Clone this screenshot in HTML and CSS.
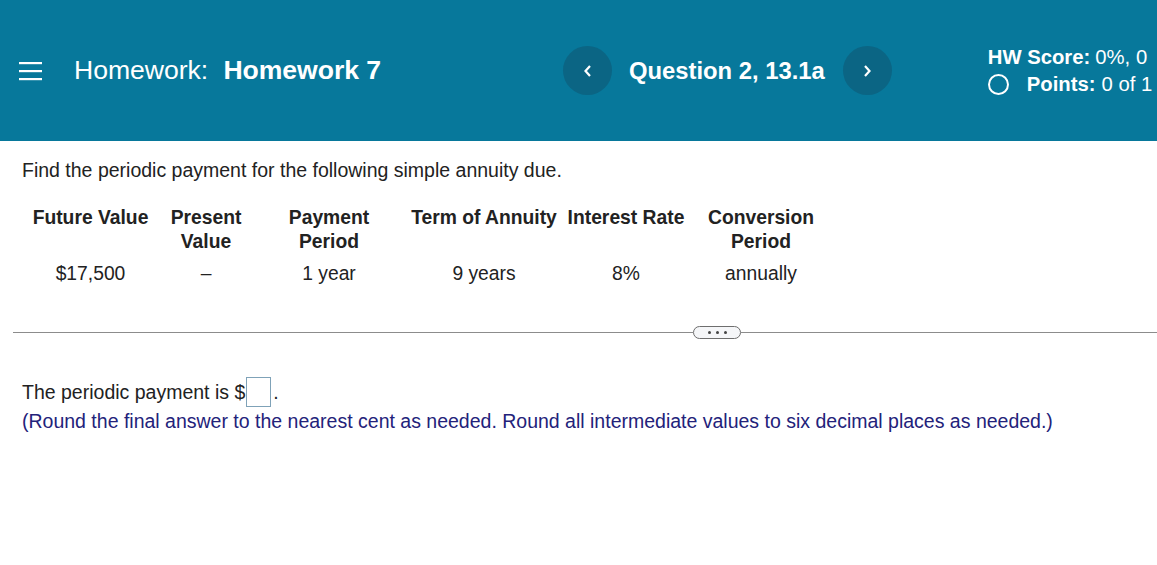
FILE: index.html
```html
<!DOCTYPE html>
<html>
<head>
<meta charset="utf-8">
<link rel="stylesheet" href="styles.css">
</head>
<body>
<header class="topbar">
  <div class="left">
    <svg class="menu" width="23" height="20" viewBox="0 0 23 20"><rect x="0" y="1" width="23" height="2.2" fill="#fff"/><rect x="0" y="9" width="23" height="2.2" fill="#fff"/><rect x="0" y="17" width="23" height="2.2" fill="#fff"/></svg>
    <div class="title">Homework: <b>Homework 7</b></div>
  </div>
  <div class="nav">
    <span class="circ"><svg width="10" height="14" viewBox="0 0 10 14"><path d="M7 2 L2.5 7 L7 12" fill="none" stroke="#fff" stroke-width="2.2"/></svg></span>
    <span class="qtitle">Question 2, 13.1a</span>
    <span class="circ"><svg width="10" height="14" viewBox="0 0 10 14"><path d="M3 2 L7.5 7 L3 12" fill="none" stroke="#fff" stroke-width="2.2"/></svg></span>
  </div>
  <div class="score">
    <div class="srow"><b>HW Score:</b> 0%, 0</div>
    <div class="srow prow"><span class="ring"></span><b>Points:</b> 0 of 1</div>
  </div>
</header>
<main class="content">
  <p class="prompt">Find the periodic payment for the following simple annuity due.</p>
  <table class="data">
    <colgroup><col class="c1"><col class="c2"><col class="c3"><col class="c4"><col class="c5"><col class="c6"></colgroup>
    <thead>
      <tr><th>Future Value</th><th>Present<br>Value</th><th>Payment<br>Period</th><th>Term of Annuity</th><th>Interest Rate</th><th>Conversion<br>Period</th></tr>
    </thead>
    <tbody>
      <tr><td>$17,500</td><td>&ndash;</td><td>1 year</td><td>9 years</td><td>8%</td><td>annually</td></tr>
    </tbody>
  </table>
  <div class="divider">
    <span class="seg-left"></span>
    <span class="pill"><i></i><i></i><i></i></span>
    <span class="seg-right"></span>
  </div>
  <div class="answer">
    <div class="aline">The periodic payment is $<span class="inbox"></span>.</div>
    <div class="note">(Round the final answer to the nearest cent as needed. Round all intermediate values to six decimal places as needed.)</div>
  </div>
</main>
</body>
</html>
```
FILE: styles.css
```css
html, body {
  margin: 0;
  padding: 0;
  background: #fff;
}
body {
  font-family: "Liberation Sans", Arial, sans-serif;
  color: #222;
  overflow: hidden;
}
.topbar {
  height: 141px;
  background: #07789b;
  color: #fff;
  display: flex;
  align-items: center;
  overflow: hidden;
  white-space: nowrap;
}
.left {
  width: 544px;
  padding-left: 19px;
  display: flex;
  align-items: center;
  flex: none;
}
.menu {
  display: block;
  margin-right: 32px;
}
.title {
  font-size: 26.6px;
  letter-spacing: -0.05px;
}
.title b {
  margin-left: 8px;
}
.nav {
  display: flex;
  align-items: center;
  flex: none;
}
.circ {
  width: 49px;
  height: 49px;
  border-radius: 50%;
  background: #0b6584;
  display: flex;
  align-items: center;
  justify-content: center;
}
.qtitle {
  font-size: 23.8px;
  font-weight: bold;
  margin: 0 18px 0 17px;
}
.score {
  margin-left: 96px;
  flex: none;
  font-size: 20.3px;
  padding-top: 1px;
}
.srow {
  height: 27px;
  line-height: 27px;
  display: flex;
  align-items: center;
  gap: 5px;
}
.prow {
  gap: 6px;
}
.ring {
  width: 17px;
  height: 17px;
  border: 2.5px solid #fff;
  border-radius: 50%;
  margin-right: 12px;
  box-sizing: content-box;
}
.content {
  padding: 0 0 0 22px;
}
.prompt {
  margin: 17px 0 24px 0;
  font-size: 19.5px;
  line-height: 24px;
}
.data {
  border-collapse: collapse;
  table-layout: fixed;
  width: 810px;
  font-size: 19.3px;
}
.c1 { width: 137px; }
.c2 { width: 94px; }
.c3 { width: 152px; }
.c4 { width: 158px; }
.c5 { width: 126px; }
.c6 { width: 144px; }
.data th, .data td {
  padding: 0;
  text-align: center;
  line-height: 24px;
  vertical-align: top;
}
.data th {
  font-weight: bold;
}
.data td {
  padding-top: 8px;
}
.divider {
  display: flex;
  align-items: center;
  margin: 40px 0 0 -9px;
  height: 13px;
}
.seg-left {
  width: 680px;
  height: 1px;
  background: #8c8c8c;
}
.seg-right {
  flex: 1;
  height: 1px;
  background: #8c8c8c;
}
.pill {
  width: 46px;
  height: 11px;
  border: 1px solid #6e6e6e;
  border-radius: 7px;
  background: #f5f6f8;
  display: flex;
  align-items: center;
  justify-content: center;
  gap: 5px;
}
.pill i {
  width: 3px;
  height: 3px;
  border-radius: 50%;
  background: #444;
}
.answer {
  margin-top: 38px;
  font-size: 19.5px;
}
.aline {
  height: 30px;
  display: flex;
  align-items: center;
}
.inbox {
  display: inline-block;
  width: 23px;
  height: 28px;
  border: 1px solid #7fa2b8;
  margin: 0 2px 0 1px;
}
.note {
  color: #23227a;
  line-height: 28px;
}
```
